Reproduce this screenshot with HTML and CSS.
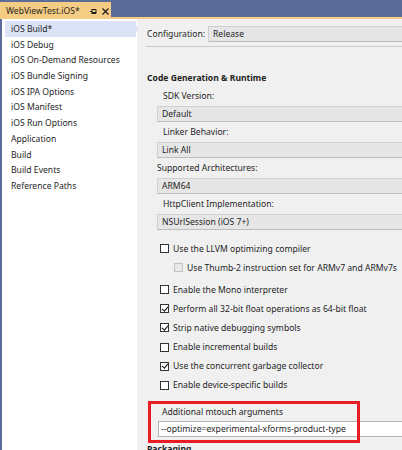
FILE: index.html
```html
<!DOCTYPE html>
<html>
<head>
<meta charset="utf-8">
<link rel="stylesheet" href="styles.css">
</head>
<body>
<div class="window">
  <div class="titlebar">
    <div class="tab">
      <span class="tab-title">WebViewTest.iOS*</span>
      <svg class="pin" width="7" height="7" viewBox="0 0 7 7"><path d="M0 3.5H2M2 1v5M2 1.5h4v4H2M2 4.5h4" fill="none" stroke="#1e1e1e" stroke-width="1"/></svg>
      <svg class="close" width="7" height="7" viewBox="0 0 7 7"><path d="M0.5 0.5L6.5 6.5M6.5 0.5L0.5 6.5" stroke="#1e1e1e" stroke-width="1.2"/></svg>
    </div>
  </div>
  <div class="main">
    <ul class="nav">
      <li class="selected">iOS Build*</li>
      <li>iOS Debug</li>
      <li>iOS On-Demand Resources</li>
      <li>iOS Bundle Signing</li>
      <li>iOS IPA Options</li>
      <li>iOS Manifest</li>
      <li>iOS Run Options</li>
      <li>Application</li>
      <li>Build</li>
      <li>Build Events</li>
      <li>Reference Paths</li>
    </ul>
    <div class="content">
      <div class="config-row">
        <span class="config-label">Configuration:</span>
        <div class="select">Release</div>
      </div>
      <div class="sep"></div>
      <h2 class="section">Code Generation &amp; Runtime</h2>
      <div class="field">
        <div class="label">SDK Version:</div>
        <div class="select">Default</div>
      </div>
      <div class="field">
        <div class="label">Linker Behavior:</div>
        <div class="select">Link All</div>
      </div>
      <div class="field">
        <div class="label label-shift">Supported Architectures:</div>
        <div class="select">ARM64</div>
      </div>
      <div class="field">
        <div class="label">HttpClient Implementation:</div>
        <div class="select">NSUrlSession (iOS 7+)</div>
      </div>
      <div class="checks">
        <label class="check"><span class="box"></span>Use the LLVM optimizing compiler</label>
        <label class="check sub disabled"><span class="box"></span>Use Thumb-2 instruction set for ARMv7 and ARMv7s</label>
        <label class="check gap"><span class="box"></span>Enable the Mono interpreter</label>
        <label class="check"><span class="box checked"></span>Perform all 32-bit float operations as 64-bit float</label>
        <label class="check"><span class="box checked"></span>Strip native debugging symbols</label>
        <label class="check"><span class="box"></span>Enable incremental builds</label>
        <label class="check"><span class="box checked"></span>Use the concurrent garbage collector</label>
        <label class="check"><span class="box"></span>Enable device-specific builds</label>
      </div>
      <div class="mtouch">
        <div class="label">Additional mtouch arguments</div>
        <div class="input">--optimize=experimental-xforms-product-type</div>
      </div>
      <h2 class="section packaging">Packaging</h2>
    </div>
  </div>
</div>
</body>
</html>
```

FILE: styles.css
```css
* { box-sizing: border-box; }
html, body {
  margin: 0;
  padding: 0;
  width: 402px;
  height: 450px;
  overflow: hidden;
  background: #f0f0f0;
  font-family: "Noto Sans", "Open Sans", sans-serif;
  font-size: 8.6px;
  color: #1e1e1e;
}
.window { width: 402px; height: 450px; display: flex; flex-direction: column; }
.titlebar {
  height: 19px;
  background: linear-gradient(#5d6b99 0, #5d6b99 17px, #f5cc84 17px);
  display: flex;
  align-items: flex-end;
  flex-shrink: 0;
}
.tab {
  background: #f5cc84;
  height: 17px;
  width: 111px;
  display: flex;
  align-items: center;
  padding: 2px 0 0 6px;
}
.tab-title { color: #1e1e1e; line-height: 1; }
.pin { margin-left: 10px; }
.close { margin-left: 5px; }
.main { display: flex; flex: 1; min-height: 0; }
.nav {
  list-style: none;
  margin: 0;
  padding: 2px 1px 0 3px;
  width: 137px;
  background: #ffffff;
  border-left: 2px solid #5d6b99;
  flex-shrink: 0;
}
.nav li {
  height: 15.7px;
  line-height: 15.7px;
  padding: 1px 0 0 6px;
  white-space: nowrap;
  color: #1e1e1e;
}
.nav li.selected {
  background: #dde3f6;
  position: relative;
}
.nav li.selected::after {
  content: "";
  position: absolute;
  right: -3px;
  top: 5px;
  border-left: 3px solid #dde3f6;
  border-top: 3px solid transparent;
  border-bottom: 3px solid transparent;
}
.content {
  flex: 1;
  padding: 7px 0 0 9px;
  min-width: 0;
  overflow: hidden;
}
.config-row { display: flex; align-items: center; height: 16px; }
.config-label { width: 62px; flex-shrink: 0; padding-left: 1px; }
.select {
  flex: 1;
  height: 16px;
  line-height: 14px;
  background: #e6e6e6;
  border: 1px solid #d0d0d0;
  border-bottom-color: #bdbdbd;
  border-right: none;
  padding-left: 4px;
  white-space: nowrap;
}
.sep { height: 1px; background: #cccccc; margin-top: 4px; }
.section {
  font-size: 8.6px;
  font-weight: bold;
  margin: 23px 0 0 1px;
  line-height: 16px;
}
.field { margin-left: 11px; }
.field .label { padding-left: 6px; height: 20px; line-height: 20px; }
.field .label-shift { padding-left: 0; }
.checks { margin: 9px 0 0 14px; }
.check { display: flex; align-items: center; height: 19.1px; white-space: nowrap; }
.check.sub { margin-left: 14px; }
.check.gap { margin-top: 3px; }
.box {
  width: 9px; height: 9px;
  border: 1px solid #333333;
  background: #fff;
  margin-right: 4px;
  position: relative;
  flex-shrink: 0;
}
.disabled .box { border-color: #c2c2c2; background: #e8e8e8; }
.box.checked::after {
  content: "";
  position: absolute;
  left: 2px; top: -0.5px;
  width: 2.5px; height: 5px;
  border-right: 1.4px solid #111;
  border-bottom: 1.4px solid #111;
  transform: rotate(40deg);
}
.mtouch {
  position: relative;
  margin: 6px 42px 0 2px;
  padding: 3px 0 6px 10px;
}
.mtouch::after {
  content: "";
  position: absolute;
  inset: 0;
  border: 3px solid #e81c24;
  pointer-events: none;
}
.mtouch .label { padding-left: 4px; line-height: 16px; height: 16px; }
.input {
  height: 16px;
  line-height: 14px;
  margin-top: 1px;
  background: #fff;
  border: 1px solid #b4b4b4;
  border-right: none;
  padding-left: 2px;
  margin-right: -50px;
  white-space: nowrap;
}
.packaging { margin: 0 0 0 1px; line-height: 12px; }
```
